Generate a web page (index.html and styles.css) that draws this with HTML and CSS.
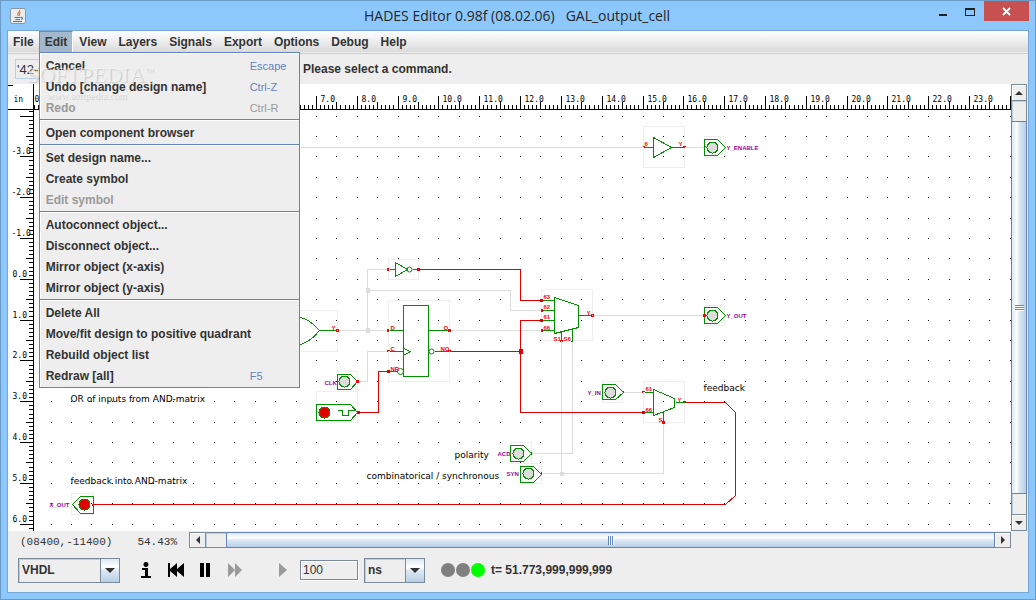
FILE: index.html
```html
<!DOCTYPE html>
<html lang="en">
<head>
<meta charset="utf-8">
<title>HADES Editor</title>
<link rel="stylesheet" href="styles.css">
</head>
<body>
<div class="window">
  <header class="titlebar">
    <svg class="app-icon" width="16" height="16" viewBox="0 0 16 16" aria-hidden="true">
      <rect x=".5" y=".5" width="15" height="15" rx="1.500" fill="#e9edf0" stroke="#8b98a3"/>
      <path d="M9.500 2C11 4 6 5 8 8M10.500 4.500C8.500 5.500 10 6.500 9 8" fill="none" stroke="#e8792b" stroke-width="1.200"/>
      <path d="M4.500 9.500h6M5.500 11.500h4.500M3 13.500h9M11 9.500c2-.5 2 1.500 0 2" fill="none" stroke="#4b7796" stroke-width="1.100"/>
    </svg>
    <h1 class="title">HADES Editor 0.98f (08.02.06)   GAL_output_cell</h1>
    <div class="win-buttons">
      <button class="win-btn win-min" aria-label="Minimize"><svg width="11" height="11" viewBox="0 0 11 11"><path d="M1 8h8v2H1z" fill="#222"/></svg></button>
      <button class="win-btn win-max" aria-label="Maximize"><svg width="11" height="11" viewBox="0 0 11 11" shape-rendering="crispEdges"><path d="M0 2h10v8H0zM1 4v5h8V4z" fill="#222" fill-rule="evenodd"/></svg></button>
      <button class="win-btn win-close" aria-label="Close"><svg width="9" height="9" viewBox="0 0 9 9"><path d="M1 1l7 7M8 1l-7 7" stroke="#fff" stroke-width="1.800"/></svg></button>
    </div>
  </header>
  <main class="client">
    <nav class="menubar">
      <div class="menu"><button class="menu-title">File</button></div>
      <div class="menu">
        <button class="menu-title menu-open" aria-expanded="true">Edit</button>
        <div class="popup" role="menu">
          <button class="item" role="menuitem"><span>Cancel</span><span class="key">Escape</span></button>
          <button class="item" role="menuitem"><span>Undo [change design name]</span><span class="key">Ctrl-Z</span></button>
          <button class="item" role="menuitem" disabled><span>Redo</span><span class="key">Ctrl-R</span></button>
          <hr class="sep">
          <button class="item" role="menuitem">Open component browser</button>
          <hr class="sep">
          <button class="item" role="menuitem">Set design name...</button>
          <button class="item" role="menuitem">Create symbol</button>
          <button class="item" role="menuitem" disabled>Edit symbol</button>
          <hr class="sep">
          <button class="item" role="menuitem">Autoconnect object...</button>
          <button class="item" role="menuitem">Disconnect object...</button>
          <button class="item" role="menuitem">Mirror object (x-axis)</button>
          <button class="item" role="menuitem">Mirror object (y-axis)</button>
          <hr class="sep">
          <button class="item" role="menuitem">Delete All</button>
          <button class="item" role="menuitem">Move/fit design to positive quadrant</button>
          <button class="item" role="menuitem">Rebuild object list</button>
          <button class="item" role="menuitem"><span>Redraw [all]</span><span class="key">F5</span></button>
          <div class="watermark" aria-hidden="true"><div class="wm-name">SOFTPEDIA<sup>™</sup></div><div class="wm-url">www.softpedia.com</div></div>
        </div>
      </div>
      <div class="menu"><button class="menu-title">View</button></div>
      <div class="menu"><button class="menu-title">Layers</button></div>
      <div class="menu"><button class="menu-title">Signals</button></div>
      <div class="menu"><button class="menu-title">Export</button></div>
      <div class="menu"><button class="menu-title">Options</button></div>
      <div class="menu"><button class="menu-title">Debug</button></div>
      <div class="menu"><button class="menu-title">Help</button></div>
    </nav>
    <div class="command">
      <input class="value" aria-label="Value" value="'42-p">
      <p class="message">Please select a command.</p>
    </div>
    <div class="work">
      <div class="canvas">
        <svg class="sheet" id="sheet" shape-rendering="crispEdges">
          <g transform="translate(-7.5 -83.5)">
            <g id="dots"></g>
            <g class="bounds">
              <path d="M643 126h41v41h-41zM704 136h21v21h-21zM296 310h41v41h-41zM388 259h30v20h-30zM388 300h61v81h-61zM541 289h51v51h-51zM704 305h20v20h-20zM643 381h41v41h-41zM602 381h20v21h-20zM511 442h20v21h-20zM520 463h21v20h-21zM337 371h20v20h-20zM316 391h41v31h-41zM71 493h22v21h-22z"/>
            </g>
            <g class="wire low">
              <path d="M300 147H643M685 147H704M338 330H388M367 330V269H388M367 290H510V310H541M449 330H541M358 381H367V351H388M593 315H704M623 392H643M531 453H572V341M541 473H663V423M561 341V473"/>
              <path class="node" d="M366 288h3v4h-3zM366 328h3v4h-3zM560 472h3v3h-3z"/>
            </g>
            <g class="wire high">
              <path d="M418 269H520V300H541M449 351H520M541 320H520V412H643M358 412H378V371H388M684 402H725L735 412V495L725 504H93"/>
              <path class="node" d="M519 349h3v4h-3zM417 268h2v2h-2zM540 299h2v2h-2zM540 319h2v2h-2zM642 411h2v2h-2zM357 411h2v2h-2zM387 370h2v2h-2z"/>
            </g>
            <g class="part">
              <path d="M644 147H653M653 137V157L671 147ZM671 147H684"/>
              <path d="M296 316Q309 318 319 330Q309 343 296 345M319 330H336"/>
              <path d="M389 269H395M395 262V276L407 269ZM412 269H418"/><circle class="bubble" cx="409" cy="269" r="2.500"/>
              <path d="M403 305H428V376H403ZM389 330H403M389 351H403M403 348L410 351L403 355M389 371H397M428 330H449M434 351H448"/><circle class="bubble" cx="400" cy="371" r="3"/><circle class="bubble" cx="431" cy="351" r="2.500"/>
              <path d="M542 300H554M542 310H554M542 320H554M542 330H554M554 297L578 305V327L554 333ZM578 315H591M561 331V340M572 328V340"/>
              <path d="M644 392H653M644 412H653M653 389L674 398V407L653 415ZM675 402H684M663 411V422"/>
              <path d="M704 139H717L725 147L717 155H704ZM704 307H717L725 315L717 323H704ZM602 384H615L623 392L615 399H602ZM510 445H523L531 453L523 461H510ZM520 466H533L541 474L533 482H520ZM337 374H350L357 381L350 389H337ZM316 404H350L357 412L350 420H316ZM93 496H80L72 504L80 513H93Z"/>
              <path d="M337 410H342V415H348V410H354"/>
              <g class="lamp"><circle cx="712" cy="147" r="5.500"/><circle cx="712" cy="315" r="5.500"/><circle cx="610" cy="392" r="5.500"/><circle cx="518" cy="453" r="5.500"/><circle cx="528" cy="473" r="5.500"/><circle cx="344" cy="381" r="5.500"/></g>
              <g class="lamp-on"><circle cx="324" cy="412" r="5.500"/><circle cx="84" cy="504" r="5.500"/></g>
            </g>
            <path class="pins" d="M642 146h2v1M683 147v-1h2M704 146h1M336 329h2v2h-2zM387 268h1v2h-1zM387 329h1v2h-1zM387 351v-1h2M448 329h2v2h-2zM448 351v-1h2M541 309h1v2h-1zM541 329h1v2h-1zM560 341v-1h2v1M570 341h2v-1M591 314h2v2h-2zM703 314h2v2h-2zM642 392v-1h2M662 421h2v2h-2zM622 391h1v1M683 402v-1h2M530 452h1v2M540 472h1v2h-1M356 380h2v2h-2zM92 503v2"/>
            <g class="pin-label">
              <text x="644" y="145">6</text><text x="678" y="145">Y</text><text x="331" y="329">Y</text>
              <text x="390" y="329">D</text><text x="390" y="350">C</text><text x="390" y="370">NR</text><text x="443" y="329">O</text><text x="440" y="350">NO</text>
              <text x="543" y="298">63</text><text x="543" y="308">62</text><text x="543" y="318">61</text><text x="543" y="329">66</text><text x="553" y="340">S1</text><text x="563" y="340">S6</text><text x="586" y="314">Y</text>
              <text x="645" y="390">61</text><text x="645" y="411">66</text><text x="677" y="401">Y</text><text x="658" y="421">S</text>
            </g>
            <g class="port-label">
              <text x="726" y="149">Y_ENABLE</text><text x="726" y="317">Y_OUT</text><text x="587" y="394">Y_IN</text><text x="497" y="455">ACD</text><text x="506" y="475">SYN</text><text x="324" y="384">CLK</text><text x="49" y="506">X_OUT</text>
            </g>
            <g class="note">
              <text x="70" y="401">OR of inputs from AND-matrix</text><text x="70" y="483">feedback into AND-matrix</text><text x="703" y="390">feedback</text><text x="454" y="457">polarity</text><text x="366" y="478">combinatorical / synchronous</text>
            </g>
            <g id="rulers" class="ruler"></g>
          </g>
        </svg>
      </div>
      <div class="scroll scroll-v">
        <button class="arrow" aria-label="Scroll up"><svg width="8" height="4" viewBox="0 0 8 4"><path d="M0 4L4 0L8 4Z"/></svg></button>
        <div class="track"><div class="thumb"><i class="grip"></i></div></div>
        <button class="arrow" aria-label="Scroll down"><svg width="8" height="4" viewBox="0 0 8 4"><path d="M0 0L4 4L8 0Z"/></svg></button>
      </div>
    </div>
    <div class="status">
      <p class="coords"><span>(08400,-11400)</span><span>54.43%</span></p>
      <div class="scroll scroll-h">
        <button class="arrow" aria-label="Scroll left"><svg width="4" height="8" viewBox="0 0 4 8"><path d="M4 0L0 4L4 8Z"/></svg></button>
        <div class="track"><div class="thumb"><i class="grip"></i></div></div>
        <button class="arrow" aria-label="Scroll right"><svg width="4" height="8" viewBox="0 0 4 8"><path d="M0 0L4 4L0 8Z"/></svg></button>
      </div>
    </div>
    <footer class="controls">
      <span class="combo combo-wide"><select aria-label="Signal type"><option>VHDL</option></select></span>
      <div class="sim">
        <button class="tool" aria-label="Info"><svg width="12" height="16" viewBox="0 0 12 16"><path d="M6 0a2.500 2.500 0 1 1-.1 0zM2 6h6v8h3v2H1v-2h4V8H2z"/></svg></button>
        <button class="tool" aria-label="Rewind"><svg width="16" height="14" viewBox="0 0 16 14"><path d="M0 0h2v6L9 0v6l7-6v14L9 8v6L2 8v6H0z"/></svg></button>
        <button class="tool" aria-label="Pause"><svg width="10" height="14" viewBox="0 0 10 14"><path d="M0 0h4v14H0zM6 0h4v14H6z"/></svg></button>
        <button class="tool tool-off" aria-label="Run" disabled><svg width="14" height="14" viewBox="0 0 14 14"><path d="M0 0l7 7l-7 7zM7 0l7 7l-7 7z"/></svg></button>
      </div>
      <button class="tool tool-off step" aria-label="Step" disabled><svg width="8" height="14" viewBox="0 0 8 14"><path d="M0 0l8 7l-8 7z"/></svg></button>
      <input class="interval" aria-label="Interval" value="100">
      <span class="combo combo-small"><select aria-label="Unit"><option>ns</option></select></span>
      <div class="leds"><i class="led"></i><i class="led"></i><i class="led led-on"></i></div>
      <output class="time">t= 51.773,999,999,999</output>
    </footer>
  </main>
</div>
<script src="app.js"></script>
</body>
</html>
```
FILE: styles.css
```css
* { box-sizing: border-box; }
body { margin: 0; font: bold 12px/14px "Liberation Sans", Arial, sans-serif; color: #333; }
button, input, select { font: inherit; color: inherit; margin: 0; padding: 0; border: 0; border-radius: 0; background: none; }
p, h1 { margin: 0; }

.window { display: flex; flex-direction: column; height: 100vh; min-height: 480px; padding: 0 6px 6px; background: #8dc8fc; border: 1px solid #6a9bc6; }
.titlebar { position: relative; display: flex; align-items: center; height: 29px; flex: none; }
.app-icon { margin-left: 3px; }
.title { flex: 1; text-align: center; white-space: pre; font: 14px/20px "Open Sans", "Noto Sans", sans-serif; color: #262626; padding-left: 78px; }
.win-buttons { display: flex; align-self: flex-start; }
.win-btn { display: flex; justify-content: center; align-items: center; width: 27px; height: 20px; }
.win-close { width: 45px; background: #c75050; }

.client { flex: 1; min-height: 0; display: flex; flex-direction: column; background: #eee; border: 1px solid #78a8d5; }

.menubar { display: flex; flex: none; height: 23px; background: linear-gradient(#fff, #dadada 21px, #eee 21px); border-bottom: 1px solid #ccc; }
.menu { position: relative; height: 21px; }
.menu-title { height: 21px; padding: 0 6px; white-space: nowrap; }
.menu:first-child .menu-title { padding: 0 5px; }
.menu-open { background: #a3b8cc; border: 1px solid #7a8a99; border-bottom: 0; border-right-color: #fff; padding: 0 5px; }
.popup { position: absolute; z-index: 5; top: 21px; left: 0; width: 261px; padding: 2px 1px 1px; background: #eee; border: 1px solid #6382bf; box-shadow: inset 1px 1px #fff; }
.item { display: flex; align-items: center; width: 100%; height: 21px; padding: 0 12px 0 5px; text-align: left; white-space: nowrap; }
.item:disabled { color: #999; }
.item span:first-child { flex: 1; }
.key { width: 36px; font-weight: normal; font-size: 11px; color: #6382bf; }
.item:disabled .key { color: #999; }
.sep { height: 4px; margin: 0 -1px; border: 0; background: linear-gradient(#eee 1px, #6382bf 1px, #6382bf 2px, #fff 2px, #fff 3px, #eee 3px); }
.watermark { position: absolute; top: 8px; left: -13px; pointer-events: none; font-family: "Liberation Serif", serif; font-weight: normal; color: rgba(255, 255, 255, .5); text-shadow: 1px 1px 1px rgba(120, 120, 120, .3); }
.wm-name { font-size: 22px; line-height: 28px; white-space: nowrap; }
.wm-name sup { font-size: 9px; line-height: 9px; }
.wm-url { padding-left: 20px; font-size: 10px; line-height: 14px; }

.command { display: flex; align-items: center; flex: none; height: 30px; padding-left: 7px; gap: 18px; }
.value { width: 270px; height: 20px; padding: 0 1px; font-size: 13px; font-weight: normal; border: 1px solid #b8cfe5; }

.work { display: flex; flex: 1; min-height: 0; padding-right: 1px; }
.canvas { flex: 1; min-width: 0; overflow: hidden; background: #fff; }
.sheet { display: block; width: 100%; height: 100%; font-family: "DejaVu Sans", sans-serif; font-weight: normal; }
.bounds { fill: none; stroke: #eee; }
.wire { fill: none; }
.low { stroke: #dcdcdc; }
.high { stroke: #e00000; }
.low .node { fill: #dcdcdc; }
.high .node { fill: #e00000; }
.part { fill: none; stroke: #009000; }
.bubble { shape-rendering: auto; }
.lamp { fill: #dcdcdc; }
.lamp-on { fill: #e00000; }
.pins { fill: none; stroke: #f00; }
.pin-label { fill: #f00; font-size: 6px; }
.port-label { fill: #a000a0; font-size: 6px; }
.pin-label, .port-label { font-family: "Liberation Sans", sans-serif; font-weight: bold; }
.note { fill: #000; font-size: 9px; }
.ruler { fill: #000; stroke: none; font: 8px "DejaVu Sans Mono", monospace; }

.scroll { display: flex; flex: 1; min-width: 0; border: 1px solid #7a8a99; }
.scroll-v { flex: none; flex-direction: column; width: 16px; }
.scroll-h { height: 16px; }
.arrow { display: flex; align-items: center; justify-content: center; flex: none; width: 15px; height: 15px; background: #eee; box-shadow: inset 1px 1px #fff; fill: #333; }
.scroll-v .arrow { width: 14px; }
.scroll-h .arrow { height: 14px; }
.track { flex: 1; display: flex; min-width: 0; min-height: 0; border: 0 solid #7a8a99; }
.scroll-v .track { flex-direction: column; border-width: 1px 0; padding: 20px 0; box-shadow: inset 1px 1px #b8cfe5; }
.scroll-h .track { border-left-width: 1px; padding-left: 20px; box-shadow: inset 1px 1px #b8cfe5; }
.thumb { flex: 1; display: flex; align-items: center; justify-content: center; border: 1px solid #6382bf; }
.scroll-v .thumb { margin: 0 -1px; background: linear-gradient(90deg, #dde8f3, #fff 35%, #dde8f3 50%, #b8cfe5); }
.scroll-h .thumb { margin: -1px 0; background: linear-gradient(#dde8f3, #fff 35%, #dde8f3 50%, #b8cfe5); }
.grip { width: 6px; height: 9px; background: repeating-linear-gradient(90deg, #6382bf 0 1px, #fff 1px 2px); }
.scroll-v .grip { width: 9px; height: 6px; background: repeating-linear-gradient(#6382bf 0 1px, #fff 1px 2px); }

.status { display: flex; flex: none; height: 17px; padding: 1px 17px 0 0; }
.coords { display: flex; gap: 25px; width: 181px; padding: 3px 0 0 12px; font: 11px/14px "Liberation Mono", monospace; white-space: nowrap; }

.controls { display: flex; align-items: center; flex: none; height: 44px; padding: 0 10px; }
.combo { position: relative; display: flex; height: 25px; border: 1px solid #7a8a99; box-shadow: inset 1px 1px #b8cfe5; }
.combo select { appearance: none; width: 100%; padding: 0 20px 0 3px; background: linear-gradient(#dde8f3, #fff 35%, #dde8f3 50%, #b8cfe5) right / 18px 100% no-repeat, linear-gradient(#7a8a99, #7a8a99) right 18px top / 1px 100% no-repeat; }
.combo::after { content: ""; position: absolute; right: 4px; top: 9px; border: 5px solid transparent; border-top-color: #333; border-bottom: 0; }
.combo-wide { width: 102px; }
.combo-small { width: 61px; margin-left: 6px; }
.sim { display: flex; align-items: center; gap: 16px; margin-left: 20px; }
.tool { display: flex; fill: #000; }
.tool-off { fill: #999; }
.sim .tool-off { margin-left: 2px; }
.step { margin-left: 37px; }
.interval { width: 58px; height: 20px; margin-left: 13px; padding: 0 2px; font-weight: normal; border: 1px solid #7a8a99; box-shadow: 1px 1px #fff, inset 1px 1px #fff; }
.leds { display: flex; gap: 1px; margin: 0 6px 0 16px; }
.led { width: 14px; height: 14px; border-radius: 50%; background: #808080; }
.led-on { background: #0f0; }
```
FILE: app.js
```js
// Rulers and the grid share one scale: pixels per inch, and where 0.0 lies.
const UNIT = 40.82, X0 = 30.7, Y0 = 279.3;
const LEFT = 8, TOP = 84;
const rect = (x, y, w, h) => `M${x - 0.5} ${y - 0.5}h${w}v${h}h${-w}z`;
const length = n => n % 10 === 0 ? 13 : n % 5 === 0 ? 7 : 4;

function draw() {
  const box = document.getElementById("sheet").getBoundingClientRect();
  const right = LEFT + box.width, bottom = TOP + box.height;

  let dots = "";
  for (let x = X0 + UNIT / 2; x < right; x += UNIT / 2)
    for (let y = Y0 - 4 * UNIT; y < bottom; y += UNIT / 2)
      dots += rect(Math.floor(x), Math.floor(y), 1, 1);
  document.getElementById("dots").innerHTML = `<path d="${dots}"/>`;

  let lines = rect(LEFT, 109, box.width, 1) + rect(33, TOP, 1, box.height) + rect(LEFT, 85, 5, 1);
  let labels = '<text x="13" y="101">in</text>';
  for (let n = 1; X0 + n * UNIT / 10 < right; n++) {
    const x = Math.floor(X0 + n * UNIT / 10);
    if (x > 33) lines += rect(x, 109 - length(n), 1, length(n));
  }
  for (let n = 0; X0 + n * UNIT + 24 < right; n++)
    labels += `<text x="${Math.floor(X0 + n * UNIT) + 4}" y="101">${n}.0</text>`;
  for (let n = -41; Y0 + n * UNIT / 10 < bottom; n++) {
    const y = Math.floor(Y0 + n * UNIT / 10);
    if (y > 109) lines += rect(33 - length(n), y, length(n), 1);
    if (n % 10 === 0 && n > -40)
      labels += `<text x="${n < 0 ? 11 : 12}" y="${y - 3}">${n / 10}.0</text>`;
  }
  document.getElementById("rulers").innerHTML = `<path d="${lines}"/>${labels}`;
}

draw();
window.addEventListener("resize", draw);
```
